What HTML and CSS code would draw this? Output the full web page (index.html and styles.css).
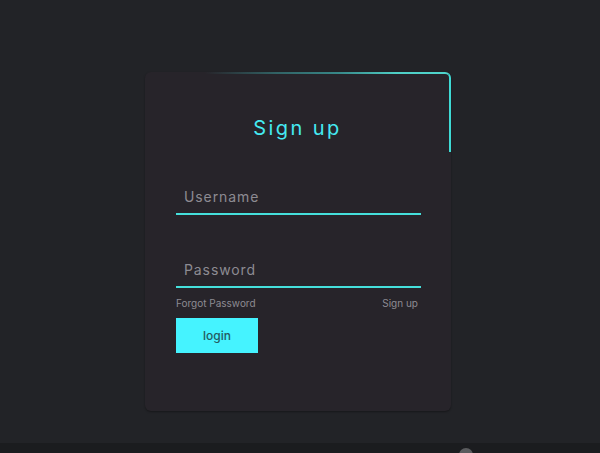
FILE: index.html
```html
<!DOCTYPE html>
<html lang="en">
<head>
<meta charset="utf-8">
<title>Sign up</title>
<link rel="stylesheet" href="styles.css">
</head>
<body>
<main class="stage">
  <section class="card">
    <form class="form">
      <h2 class="title">Sign up</h2>
      <div class="field">
        <span class="label">Username</span>
      </div>
      <div class="field field-second">
        <span class="label">Password</span>
      </div>
      <div class="links">
        <a class="link" href="#">Forgot Password</a>
        <a class="link" href="#">Sign up</a>
      </div>
      <button type="button" class="btn">login</button>
    </form>
  </section>
</main>
<div class="bottom-bar"><span class="knob"></span></div>
</body>
</html>
```

FILE: styles.css
```css
* { box-sizing: border-box; }
html, body { margin: 0; padding: 0; }
body {
  width: 600px;
  height: 453px;
  overflow: hidden;
  background: #222327;
  font-family: "Inter", "Open Sans", "DejaVu Sans", sans-serif;
  display: flex;
  flex-direction: column;
}
.stage {
  height: 443px;
  padding: 72px 0 0 145px;
}
.card {
  position: relative;
  width: 306px;
  height: 339px;
  background: #27242a;
  border-radius: 6px;
  box-shadow: 0 1px 2px rgba(0,0,0,0.35);
}
.card::before {
  content: "";
  position: absolute;
  top: 0;
  left: 60px;
  width: 240px;
  height: 2px;
  background: linear-gradient(90deg, rgba(69,216,212,0) 0%, rgba(69,216,212,0.35) 30%, rgba(69,216,212,0.55) 55%, #4fcfc6 80%, #4fd4cc 100%);
}
.card::after {
  content: "";
  position: absolute;
  top: 0;
  right: 0;
  width: 10px;
  height: 78px;
  border-top: 2px solid #4fd4cc;
  border-right: 2px solid #3fdad4;
  border-top-right-radius: 6px;
}
.form {
  display: flex;
  flex-direction: column;
  padding: 44px 30px 0 31px;
}
.title {
  margin: 0;
  text-align: center;
  color: #45eaf2;
  font-size: 20px;
  line-height: 24px;
  font-weight: 400;
  letter-spacing: 2.4px;
  padding-right: 2px;
}
.field {
  height: 42px;
  margin-top: 33px;
  border-bottom: 2px solid #45e0dc;
  display: flex;
  align-items: flex-end;
  padding: 0 0 7px 8px;
}
.field-second { margin-top: 31px; }
.label {
  color: #8d8b92;
  font-size: 14px;
  line-height: 18px;
  letter-spacing: 0.9px;
}
.links {
  display: flex;
  justify-content: space-between;
  margin-top: 8px;
  padding-right: 3px;
}
.link {
  color: #8d8b92;
  font-size: 10px;
  line-height: 14px;
  text-decoration: none;
}
.btn {
  margin-top: 8px;
  width: 82px;
  height: 35px;
  border: none;
  background: #45f3ff;
  color: #245a60;
  font-family: inherit;
  font-size: 12px;
  font-weight: 500;
  padding: 0;
}
.bottom-bar {
  position: relative;
  height: 10px;
  background: #1b1c1f;
}
.knob {
  position: absolute;
  left: 459px;
  top: 5px;
  width: 14px;
  height: 14px;
  border-radius: 50%;
  background: #5a5b5e;
}
```
